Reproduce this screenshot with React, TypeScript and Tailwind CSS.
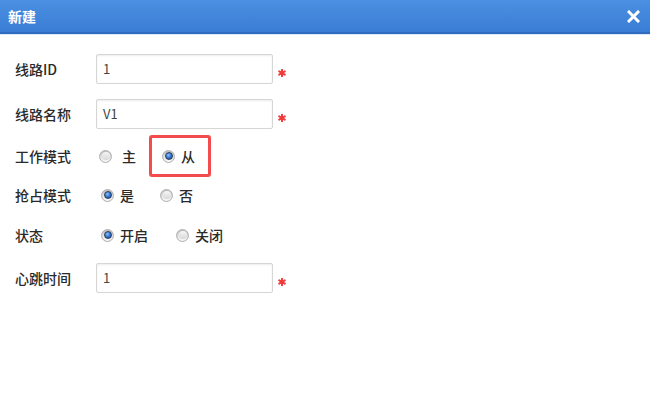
import type { ReactNode } from "react";

const FONT = { fontFamily: '"Noto Sans CJK SC", "Noto Sans", sans-serif' };

function Star() {
  return (
    <svg width="8" height="8" viewBox="0 0 8 8" className="ml-[5px] mt-[8px] shrink-0">
      <g stroke="#f03c3c" strokeWidth="2" strokeLinecap="round">
        <line x1="4" y1="0.8" x2="4" y2="7.2" />
        <line x1="1.2" y1="2.4" x2="6.8" y2="5.6" />
        <line x1="1.2" y1="5.6" x2="6.8" y2="2.4" />
      </g>
    </svg>
  );
}

function Radio({ checked }: { checked?: boolean }) {
  return (
    <span className="w-[13px] h-[13px] rounded-full border border-[#b0b0b0] bg-gradient-to-b from-[#d4d4d4] to-[#f8f8f8] flex items-center justify-center shrink-0 shadow-[inset_0_1px_2px_rgba(0,0,0,0.15)]">
      {checked ? (
        <span className="w-[8px] h-[8px] rounded-full bg-[radial-gradient(circle_at_40%_35%,#8cc0ff_0%,#2a6fd0_55%,#1b3f73_100%)] border border-[#2b3d55]" />
      ) : (
        <span className="w-[8px] h-[8px] rounded-full bg-gradient-to-b from-[#f5f5f5] to-[#d8d8d8]" />
      )}
    </span>
  );
}

function Option({ checked, label, wide }: { checked?: boolean; label: string; wide?: boolean }) {
  return (
    <span className="flex items-center">
      <Radio checked={checked} />
      <span className={wide ? "ml-[10px]" : "ml-[6px]"}>{label}</span>
    </span>
  );
}

function Row({ label, className, children }: { label: string; className: string; children: ReactNode }) {
  return (
    <div className={`flex items-center ${className}`}>
      <div className="w-[96px] pl-[15px] shrink-0">{label}</div>
      {children}
    </div>
  );
}

function Field({ value }: { value: string }) {
  return (
    <>
      <div className="w-[177px] h-[30px] border border-[#d6d6d6] rounded-[2px] bg-white shadow-[inset_0_1px_2px_rgba(0,0,0,0.08)] flex items-center pl-[6px] text-[13px] font-normal text-[#444]">
        {value}
      </div>
      <Star />
    </>
  );
}

export default function App() {
  return (
    <div className="w-[650px] h-[416px] bg-white text-[14px] font-medium text-[#2a2a2a] overflow-hidden" style={FONT}>
      {/* Title bar */}
      <div className="h-[34px] bg-gradient-to-b from-[#4b90e2] to-[#3a7dd5] border-b-2 border-[#2f6cc0] flex items-center justify-between px-[8px]">
        <span className="text-white font-bold text-[14px]">新建</span>
        <svg width="13" height="13" viewBox="0 0 13 13" className="mr-[2px]">
          <g stroke="#fff" strokeWidth="3" strokeLinecap="square">
            <line x1="2" y1="2" x2="11" y2="11" />
            <line x1="11" y1="2" x2="2" y2="11" />
          </g>
        </svg>
      </div>
      <div className="h-px bg-[#dce8f7]" />

      <Row label="线路ID" className="mt-[19px] h-[30px]">
        <Field value="1" />
      </Row>

      <Row label="线路名称" className="mt-[15px] h-[30px]">
        <Field value="V1" />
      </Row>

      <Row label="工作模式" className="mt-[6px] h-[42px]">
        <span className="ml-[3px]">
          <Option label="主" wide />
        </span>
        <div className="ml-[13px] h-[42px] w-[62px] shrink-0 border-[3px] border-[#f24c4c] rounded-[3px] flex items-center pl-[10px]">
          <Option checked label="从" />
        </div>
      </Row>

      <Row label="抢占模式" className="mt-[3px] h-[30px]">
        <span className="ml-[5px]">
          <Option checked label="是" />
        </span>
        <span className="ml-[26px]">
          <Option label="否" />
        </span>
      </Row>

      <Row label="状态" className="mt-[10px] h-[30px]">
        <span className="ml-[5px]">
          <Option checked label="开启" />
        </span>
        <span className="ml-[28px]">
          <Option label="关闭" />
        </span>
      </Row>

      <Row label="心跳时间" className="mt-[13px] h-[30px]">
        <Field value="1" />
      </Row>
    </div>
  );
}
